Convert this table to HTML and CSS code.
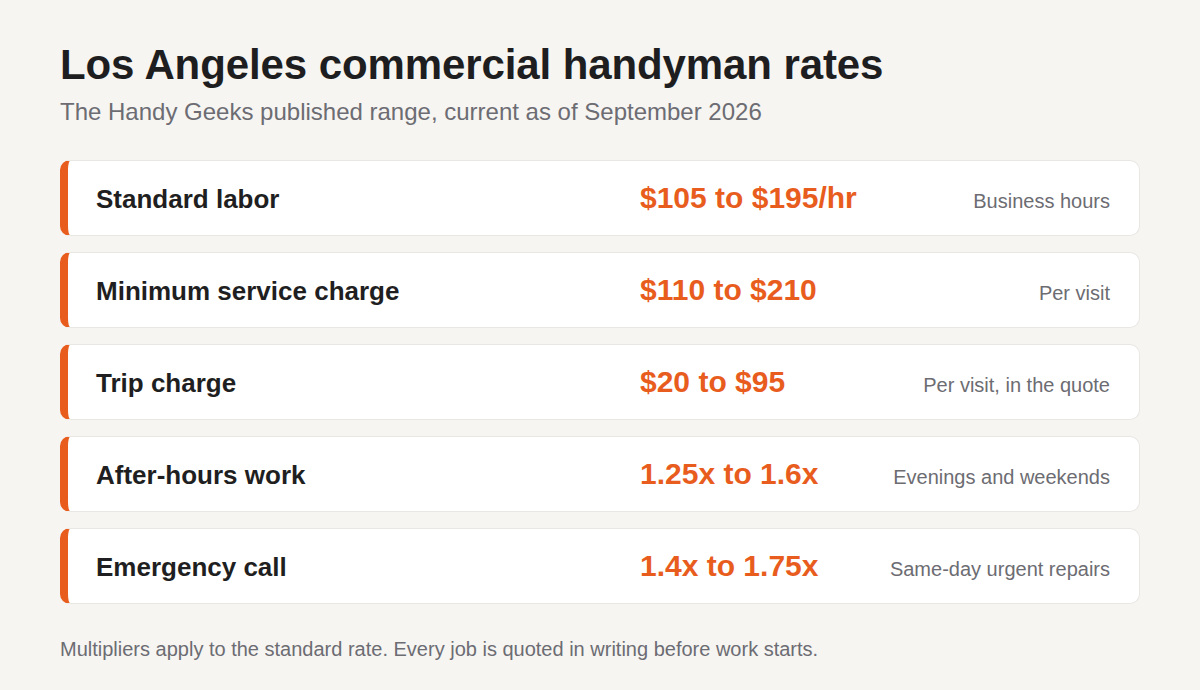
FILE: index.html
```html
<!DOCTYPE html>
<html lang="en">
<head>
<meta charset="utf-8">
<title>Los Angeles commercial handyman rates</title>
<link rel="stylesheet" href="styles.css">
</head>
<body>
<main class="page">
  <h1 class="title">Los Angeles commercial handyman rates</h1>
  <p class="subtitle">The Handy Geeks published range, current as of September 2026</p>
  <ul class="rates">
    <li class="rate"><span class="label">Standard labor</span><span class="value">$105 to $195/hr</span><span class="note">Business hours</span></li>
    <li class="rate"><span class="label">Minimum service charge</span><span class="value">$110 to $210</span><span class="note">Per visit</span></li>
    <li class="rate"><span class="label">Trip charge</span><span class="value">$20 to $95</span><span class="note">Per visit, in the quote</span></li>
    <li class="rate"><span class="label">After-hours work</span><span class="value">1.25x to 1.6x</span><span class="note">Evenings and weekends</span></li>
    <li class="rate"><span class="label">Emergency call</span><span class="value">1.4x to 1.75x</span><span class="note">Same-day urgent repairs</span></li>
  </ul>
  <p class="footnote">Multipliers apply to the standard rate. Every job is quoted in writing before work starts.</p>
</main>
</body>
</html>
```

FILE: styles.css
```css
* { box-sizing: border-box; }
html, body { margin: 0; padding: 0; }
body {
  background: #f6f5f2;
  font-family: "Liberation Sans", Arial, sans-serif;
  color: #1f1f22;
  width: 1200px;
  height: 690px;
  overflow: hidden;
}
.page {
  padding: 41px 60px 0 60px;
}
.title {
  margin: 0;
  font-size: 42px;
  line-height: 48px;
  font-weight: 700;
  color: #1e1e21;
  letter-spacing: -0.1px;
}
.subtitle {
  margin: 8px 0 0 0;
  font-size: 24px;
  line-height: 30px;
  color: #6c6c72;
}
.rates {
  list-style: none;
  margin: 33px 0 0 0;
  padding: 0;
  display: flex;
  flex-direction: column;
  gap: 16px;
}
.rate {
  height: 76px;
  background: #ffffff;
  border: 1px solid #e9e7e3;
  border-left: 8px solid #e85d1e;
  border-radius: 10px;
  display: grid;
  grid-template-columns: 544px 1fr auto;
  align-items: baseline;
  align-content: center;
  padding: 0 29px 0 28px;
}
.label {
  font-size: 26px;
  line-height: 32px;
  font-weight: 700;
  color: #1f1f22;
}
.value {
  font-size: 30px;
  line-height: 34px;
  font-weight: 700;
  color: #e85d1e;
}
.note {
  font-size: 20px;
  line-height: 24px;
  color: #6c6c72;
  text-align: right;
}
.footnote {
  margin: 33px 0 0 0;
  font-size: 20px;
  line-height: 24px;
  color: #6c6c72;
}
```
